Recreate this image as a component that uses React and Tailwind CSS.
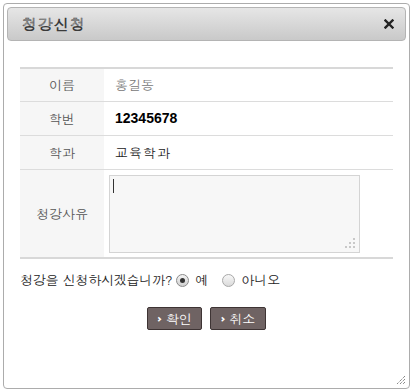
export default function App() {
  const font = { fontFamily: '"Dotum","Noto Sans CJK KR","Noto Sans",sans-serif' };
  return (
    <div className="w-[413px] h-[392px] bg-white p-[3px]" style={font}>
      <div className="relative w-[407px] h-[386px] border border-[#acacac] rounded-[4px] bg-white p-[3px]">
        <div className="flex items-center justify-between h-[34px] border border-[#b4b4b4] rounded-[4px] bg-gradient-to-b from-[#e6e6e6] to-[#c9c9c9] pl-[14px] pr-[11px]">
          <span className="text-[15px] font-bold text-[#3a3a3a] tracking-[1px]">청강신청</span>
          <svg width="10" height="10" viewBox="0 0 10 10">
            <path d="M1.5 1.5 L8.5 8.5 M8.5 1.5 L1.5 8.5" stroke="#222" strokeWidth="2.4" strokeLinecap="square" />
          </svg>
        </div>
        <div className="mt-[26px] mx-[13px] border-t-2 border-b-2 border-[#d8d8d8] text-[13px]">
          <div className="flex h-[33px] border-b border-[#dcdcdc]">
            <div className="w-[84px] bg-[#f6f6f6] flex items-center justify-center text-[#555]">이름</div>
            <div className="flex-1 flex items-center pl-[11px] text-[#777]">홍길동</div>
          </div>
          <div className="flex h-[34px] border-b border-[#dcdcdc]">
            <div className="w-[84px] bg-[#f6f6f6] flex items-center justify-center text-[#555]">학번</div>
            <div className="flex-1 flex items-center pl-[11px]">
              <span className="font-bold text-black text-[14px] w-[67px] overflow-hidden whitespace-nowrap" style={{ fontFamily: '"Liberation Sans",Arial,sans-serif' }}>12345678</span>
            </div>
          </div>
          <div className="flex h-[34px] border-b border-[#dcdcdc]">
            <div className="w-[84px] bg-[#f6f6f6] flex items-center justify-center text-[#555]">학과</div>
            <div className="flex-1 flex items-center pl-[11px] text-[#222] tracking-[1px]">교육학과</div>
          </div>
          <div className="flex h-[87px]">
            <div className="w-[84px] bg-[#f6f6f6] flex items-center justify-center text-[#555]">청강사유</div>
            <div className="flex-1 pl-[5px] pt-[5px]">
              <div className="relative w-[251px] h-[78px] border border-[#d4d4d4] bg-[#f7f7f7]">
                <div className="absolute left-[3px] top-[3px] w-px h-[14px] bg-[#333]" />
                <svg className="absolute right-[3px] bottom-[3px]" width="12" height="12" viewBox="0 0 12 12">
                  <rect x="9" y="1" width="2" height="2" fill="#c8c8c8" />
                  <rect x="5" y="5" width="2" height="2" fill="#c8c8c8" />
                  <rect x="9" y="5" width="2" height="2" fill="#c8c8c8" />
                  <rect x="1" y="9" width="2" height="2" fill="#c8c8c8" />
                  <rect x="5" y="9" width="2" height="2" fill="#c8c8c8" />
                  <rect x="9" y="9" width="2" height="2" fill="#c8c8c8" />
                </svg>
              </div>
            </div>
          </div>
        </div>
        <div className="flex items-center mt-[11px] ml-[13px] text-[13px] text-[#222] h-[20px]">
          <span className="tracking-[-0.2px]">청강을 신청하시겠습니까?</span>
          <span className="ml-[4px] w-[13px] h-[13px] rounded-full border border-[#8a8a8a] bg-gradient-to-b from-[#f4f4f4] to-[#d0d0d0] flex items-center justify-center">
            <span className="w-[5px] h-[5px] rounded-full bg-[#333]" />
          </span>
          <span className="ml-[6px]">예</span>
          <span className="ml-[14px] w-[13px] h-[13px] rounded-full border border-[#a8a8a8] bg-gradient-to-b from-[#f8f8f8] to-[#dadada]" />
          <span className="ml-[6px]">아니오</span>
        </div>
        <div className="flex justify-center gap-[8px] mt-[17px] text-[13px] text-white">
          <div className="w-[55px] h-[23px] flex items-center justify-center bg-[#6f6363] border border-[#3e3434] rounded-[2px]">
            <span className="text-[12px] font-bold mr-[4px] leading-none">›</span>확인
          </div>
          <div className="w-[56px] h-[23px] flex items-center justify-center bg-[#6f6363] border border-[#3e3434] rounded-[2px]">
            <span className="text-[12px] font-bold mr-[4px] leading-none">›</span>취소
          </div>
        </div>
        <svg className="absolute right-[3px] bottom-[3px]" width="12" height="12" viewBox="0 0 12 12">
          <path d="M11 3 L3 11 M11 6 L6 11 M11 9 L9 11" stroke="#555" strokeWidth="1" strokeDasharray="1 1" />
        </svg>
      </div>
    </div>
  );
}
